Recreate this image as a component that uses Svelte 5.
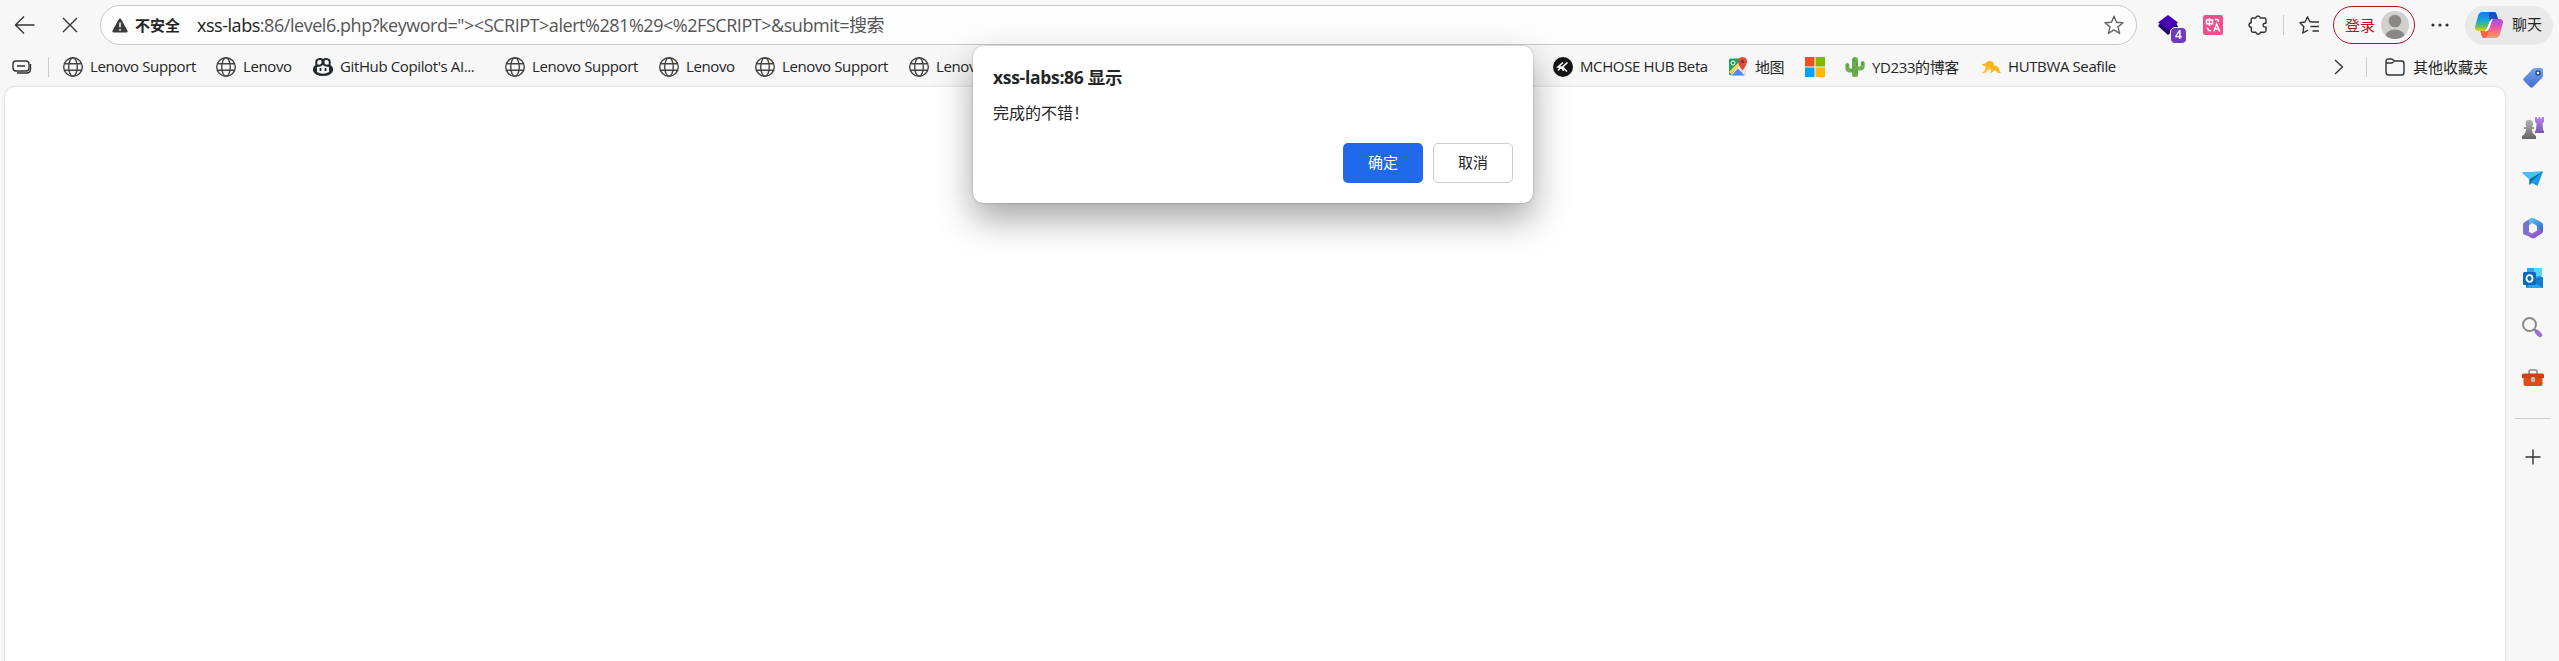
<script>
	const bookmarks = [
		{ icon: 'globe', label: 'Lenovo Support', width: 153 },
		{ icon: 'globe', label: 'Lenovo', width: 97 },
		{ icon: 'github', label: "GitHub Copilot's AI...", width: 192 },
		{ icon: 'globe', label: 'Lenovo Support', width: 154 },
		{ icon: 'globe', label: 'Lenovo', width: 96 },
		{ icon: 'globe', label: 'Lenovo Support', width: 154 },
		{ icon: 'globe', label: 'Lenovo', width: 644 },
		{ icon: 'mchose', label: 'MCHOSE HUB Beta', width: 175 },
		{ icon: 'map', label: '地图', width: 77 },
		{ icon: 'windows', label: '', width: 40 },
		{ icon: 'cactus', label: 'YD233的博客', width: 136 },
		{ icon: 'cloud', label: 'HUTBWA Seafile', width: 150 }
	];

	const tools = ['tag', 'games', 'drop', 'office', 'outlook', 'search', 'toolbox'];

	let open = $state(true);
	const close = () => (open = false);
</script>

{#snippet star()}
	<path d="M10 1.200l2.500 6 6.500.5-5 4.200 1.600 6.400L10 14.800l-5.600 3.500L6 11.900 1 7.700l6.500-.5z" />
{/snippet}

<div class="browser">
	<header class="toolbar">
		<button class="tool back" aria-label="Back">
			<svg width="22" height="20" viewBox="0 0 22 20" class="line"><path d="M20.500 10H1.500M10 1.500L1.500 10l8.500 8.500" /></svg>
		</button>
		<button class="tool stop" aria-label="Stop">
			<svg width="16" height="16" viewBox="0 0 16 16" class="line"><path d="M1 1l14 14M15 1L1 15" /></svg>
		</button>
		<div class="address">
			<svg width="16" height="15" viewBox="0 0 16 15"><path d="M8 .5q.8 0 1.200.8l6.200 11.200q.7 1.800-1 1.900H1.600q-1.700-.1-1-1.900L6.800 1.300Q7.200.5 8 .5z" fill="#3b3b3b" /><path d="M8 4.500v4.800M8 11v1.700" stroke="#fff" stroke-width="1.500" /></svg>
			<b class="insecure">不安全</b>
			<span class="url"><span class="host">xss-labs</span>:86/level6.php?keyword="&gt;&lt;SCRIPT&gt;alert%281%29&lt;%2FSCRIPT&gt;&amp;submit=搜索</span>
			<svg class="line favorite" width="20" height="20" viewBox="0 0 20 20">{@render star()}</svg>
		</div>
		<div class="extensions">
			<div class="layers">
				<svg width="20" height="20" viewBox="0 0 20 20"><path d="M0 11l2-3 9 5 7-5 2 4-10 8z" fill="#25006f" /><path d="M0 7.500L10 0l10 7.500-8.500 7.500z" fill="#4a00b5" /></svg>
				<span class="count">4</span>
			</div>
			<svg class="translate" width="20" height="20" viewBox="0 0 20 20"><rect width="20" height="20" rx="2.500" fill="#ef4f8c" /><path d="M3.500 5h6v3.700h-6zM6.500 3v8M12 4.500h2q1.500 0 1.500 2.500M4.500 12.500q0 3.300 3.500 3.300M10.700 16.500l3-7.500 3 7.500M11.700 14h4" fill="none" stroke="#fff" stroke-width="1.500" /></svg>
			<svg class="line puzzle" width="20" height="20" viewBox="0 0 20 20"><path d="M4.500 3h3.200q.4-2 2.300-2t2.300 2h4q1.700 0 1.700 1.700v3.500h-1.200q-1.800.3-1.800 2t1.800 1.900H18v3.500q0 1.600-1.700 1.600h-3.700q-.4 2-2.400 2t-2.400-2H5q-1.700 0-1.700-1.700v-3.200Q1 11.800 1 9.900t2.200-2.200V4.500Q3.200 3 4.500 3z" /></svg>
			<i class="rule"></i>
			<svg class="line favorites" width="21" height="20" viewBox="0 0 21 20"><path d="M13 7l-2.200-.3L8.500 1.800 6 7l-5 .8 3.800 4-1 6.200 5.200-2.800M13 7h7M11.500 11.500H20M13.500 16H20" /></svg>
		</div>
		<button class="login">
			<span>登录</span>
			<svg width="28" height="28" viewBox="0 0 28 28"><clipPath id="face"><circle cx="14" cy="14" r="14" /></clipPath><g clip-path="url(#face)"><path d="M0 0h28v28H0z" fill="#d2d0ce" /><circle cx="14" cy="10" r="6.300" fill="#8a8886" /><ellipse cx="14" cy="26" rx="10" ry="7.500" fill="#8a8886" /></g></svg>
		</button>
		<svg class="more" width="18" height="4" viewBox="0 0 18 4"><circle cx="2" cy="2" r="1.600" /><circle cx="9" cy="2" r="1.600" /><circle cx="16" cy="2" r="1.600" /></svg>
		<button class="chat">
			<svg width="28" height="26" viewBox="0 0 28 26">
				<defs>
					<linearGradient id="cool" x1="0" y1="0" x2="0" y2="1"><stop offset="0" stop-color="#1677e8" /><stop offset=".45" stop-color="#16a9d8" /><stop offset=".75" stop-color="#65ba62" /><stop offset="1" stop-color="#efd300" /></linearGradient>
					<linearGradient id="warm" x1="0" y1="0" x2="0" y2="1"><stop offset="0" stop-color="#a747ef" /><stop offset=".5" stop-color="#ee5b9e" /><stop offset="1" stop-color="#ff9f5c" /></linearGradient>
				</defs>
				<path d="M7.500 0H19q2 0 2.500 2l1.500 5h-4q-3 0-4 3l-2.500 6q-1 3-4 3H4q-5 0-3.700-5L3 4q1.200-4 4.500-4z" fill="url(#cool)" />
				<path d="M20.500 26H9.500q-2.500 0-3-3l-1-4h3q3 0 4-3L15 10q1-3 4-3h5q5 0 3.700 5L25 22q-1.200 4-4.500 4z" fill="url(#warm)" />
				<path d="M14 0h5q2 0 2.500 2L23 7h-4q-2.500 0-3.700 2.200L14 5z" fill="#1d4fc0" />
				<path d="M7 19h1.500q3 0 4-3l1.500 1-1.500 6q-1 3-3 3-2.500 0-3-3l-1-4z" fill="#f0654f" />
				<path d="M17.500 7.300q-2 .5-2.500 2.700l-2.500 6q-.8 2.500-2.500 3 3 0 4-3l2-6q.6-2 1.500-2.700z" fill="#fff" stroke="#fff" />
			</svg>
			<span>聊天</span>
		</button>
	</header>

	<nav class="bookmarks">
		<svg class="line workspaces" width="20" height="15" viewBox="0 0 20 15"><rect x="1" y="1" width="16" height="10" rx="3" /><path d="M5 6h8M18.500 4v5q0 4-4 4H5" /></svg>
		<i class="rule"></i>
		{#each bookmarks as bookmark}
			<a class="bookmark" href="#top" style="width: {bookmark.width}px">
				<svg width="20" height="20" viewBox="0 0 20 20">
					{#if bookmark.icon === 'globe'}
						<g fill="none" stroke="#444" stroke-width="1.400"><circle cx="10" cy="10" r="9.300" /><ellipse cx="10" cy="10" rx="4.300" ry="9.300" /><path d="M1.500 6.700h17M1.500 13.300h17" /></g>
					{:else if bookmark.icon === 'github'}
						<path d="M3 2.500Q5 .5 8 1q1.500.2 2 1.300Q10.500 1.200 12 1q3-.5 5 1.500 1.300 2 .5 5.500Q20 9.500 20 12v2q-2 5-10 5T0 14v-2q0-2.500 2.500-4Q1.700 4.500 3 2.500z" fill="#24292f" />
						<path d="M4.500 4q1-1.500 3.500-1 1 1 .3 3.500-1.800 2-4 .8Q4 5.500 4.500 4zM15.500 4q-1-1.500-3.500-1-1 1-.3 3.500 1.800 2 4 .8.300-1.800-.2-3.300zM4 10q4 0 6-2 2 2 6 2v5q-6 3.500-12 0z" fill="#f7f7f7" />
						<path d="M7.500 11v3M12.500 11v3" stroke="#24292f" stroke-width="1.800" />
					{:else if bookmark.icon === 'mchose'}
						<circle cx="10" cy="10" r="10" fill="#151515" />
						<path d="M10 5.500L5 10h3.500l2 4M14.500 5.500L9.500 10l4.500 4.500M5 13.500L8 10" fill="none" stroke="#fff" stroke-width="1.600" />
					{:else if bookmark.icon === 'map'}
						<path d="M1 3q0-1.500 1.500-1.500H15L3 18.500Q1 18 1 17z" fill="#1da462" />
						<path d="M3 18.500L15 7l3 3v7q0 1.500-1.500 1.500z" fill="#e3e3e3" /><path d="M2 16L15 3" stroke="#ffd04b" stroke-width="3" /><path d="M2.500 19L10 11l7.500 8z" fill="#4c8bf5" stroke="#f4f4f4" stroke-width=".8" />
						<path d="M14.500 0Q19 .3 19 4.500q0 3-4.500 9-4.500-6-4.500-9Q10 .3 14.500 0z" fill="#dd4b3e" /><circle cx="14.500" cy="4.500" r="1.600" fill="#822f2b" /><circle cx="5" cy="6" r="2" fill="none" stroke="#fff" />
					{:else if bookmark.icon === 'windows'}
						<path d="M0 0h9.500v9.500H0z" fill="#f25022" /><path d="M10.500 0H20v9.500h-9.500z" fill="#7fba00" /><path d="M0 10.500h9.500V20H0z" fill="#00a4ef" /><path d="M10.500 10.500H20V20h-9.500z" fill="#ffb900" />
					{:else if bookmark.icon === 'cactus'}
						<path d="M10 3v14.500" fill="none" stroke="#6aaf50" stroke-width="6" stroke-linecap="round" />
						<path d="M2.300 8v2.500q0 3 3 3H9M17.700 6v2.500q0 3-3 3H11" fill="none" stroke="#6aaf50" stroke-width="4" stroke-linecap="round" />
						<path d="M9 2v3M11.500 6v3M9 9v3M11 13v4M2.500 8v2M17.500 5v3M6 13.500h2" stroke="#4b913c" stroke-width="1" />
					{:else}
						<path d="M1 8.500q0-2.500 3.500-2Q5.500 3.500 9 4q4 0 4 4.500 4.500 0 5 3.500 0 2 2 3.500-3 1.500-4.500-1-1.500-2.500-3.500 0-2 2.500-4 2 2.500-1 2-3.500-1-2-3 .500-2 2.500-6 2.500 3-2 4-5.500Q5 9 1 8.500z" fill="#ffb31f" />
						<path d="M1.500 16q5-2 7-6" fill="none" stroke="#ffc74a" stroke-width="1.500" />
					{/if}
				</svg>
				<span>{bookmark.label}</span>
			</a>
		{/each}
		<svg class="line chevron" width="10" height="16" viewBox="0 0 10 16"><path d="M1 1l7.500 7L1 15" /></svg>
		<i class="rule"></i>
		<svg class="line folder" width="20" height="18" viewBox="0 0 20 18"><path d="M1 5V3.500Q1 1 3.500 1H7l2.500 2h6.700Q19 3 19 5.500v8.700q0 2.800-2.800 2.800H3.800Q1 17 1 14.200V5h5.200q1 0 1.800-.8L9.500 3" /></svg>
		<span class="others">其他收藏夹</span>
	</nav>

	<div class="body">
		<main class="page"></main>
	</div>

	<aside class="sidebar">
		{#each tools as tool}
			<svg width="22" height="22" viewBox="0 0 22 22">
				{#if tool === 'tag'}
					<linearGradient id="tag" x2="0" y2="1"><stop stop-color="#71a5ed" /><stop offset="1" stop-color="#466bd0" /></linearGradient>
					<path d="M11 1.500Q12 1 13.500 1H19q2 0 2 2v6q0 1-1 2l-9 9q-1.500 1.500-3 0l-6-6q-1.500-1.500 0-3z" fill="url(#tag)" /><circle cx="16" cy="6" r="2" fill="#fff" stroke="#264a89" stroke-width="1.400" />
				{:else if tool === 'games'}
					<linearGradient id="pawn" x2="0" y2="1"><stop stop-color="#b5b5b5" /><stop offset="1" stop-color="#656565" /></linearGradient><linearGradient id="rook" x2="0" y2="1"><stop stop-color="#bb83ef" /><stop offset="1" stop-color="#7754b5" /></linearGradient>
					<path d="M13 0h2v1.500h1.500V0h2v1.500H20V0h2v5l-1.500 1 .5 7 1 1v2h-9v-2l1-1 .5-7-1.500-1z" fill="url(#rook)" /><path d="M3.500 6.500a3.800 3.800 0 117.600 0q0 2-1.200 3.500H12v2h-2q0 5 4 7v3H0v-3q4-2 4-7H2v-2h2.500Q3.500 8.500 3.500 6.500z" fill="url(#pawn)" />
				{:else if tool === 'drop'}
					<path d="M0 5.500l21-1L15.500 19l-5-3-3 2v-5.500z" fill="#159ce7" /><path d="M0 5.500l21-1-13.500 8z" fill="#49c2f3" /><path d="M21 4.500L7.500 12.500V18l2-4z" fill="#105e9f" />
				{:else if tool === 'office'}
					<linearGradient id="officea" x2="1" y2="1"><stop stop-color="#6bc4ef" /><stop offset="1" stop-color="#2864d1" /></linearGradient><linearGradient id="officeb" x2="1" y2="1"><stop stop-color="#b789df" /><stop offset="1" stop-color="#6f40be" /></linearGradient>
					<path d="M10 1L2.500 5Q1 6 1 8v8q0 1.500 2 2l4 .5V8l5-4z" fill="#7773d3" /><path d="M8.500 1.500q2-1 4 0L19 5q2 1.200 2 3v7l-6-3V9l-5-3-3 2V3z" fill="url(#officea)" /><path d="M6 14l4 2.500 5-3V11l6 3q0 2-2 3l-6.500 4q-1.500.7-3 0L4 18q3 0 2-4z" fill="url(#officeb)" /><circle cx="11" cy="11" r="3.800" fill="#f7f7f7" />
				{:else if tool === 'outlook'}
					<path d="M5 1h14.500v16H5z" fill="#32a9e7" /><path d="M12 1h7.500v8H12z" fill="#50d9ff" /><path d="M4 12l17-2v11H4z" fill="#117bce" /><path d="M4 21h17l-11-7z" fill="#27a5ec" /><rect y="5" width="13" height="13" x="1" rx="1.500" fill="#0968bd" /><ellipse cx="7.500" cy="11.500" rx="3" ry="3.300" fill="none" stroke="#fff" stroke-width="1.800" />
				{:else if tool === 'search'}
					<path d="M12.500 12.500l3 3" stroke="#777" stroke-width="2" /><circle cx="7.500" cy="7.500" r="6.500" fill="none" stroke="#888" stroke-width="2" /><path d="M15 15l3 3" stroke="#9970cf" stroke-width="4.500" stroke-linecap="round" />
				{:else}
					<path d="M7 7V4.500Q7 3 8.500 3h5Q15 3 15 4.500V7" fill="none" stroke="#8b8b8b" stroke-width="1.600" /><path d="M1.500 10h19v7q0 2-2 2h-15q-2 0-2-2z" fill="#e14b16" /><path d="M0 8q0-1.500 1.500-1.500h19Q22 6.500 22 8v3H0z" fill="#cb4310" /><rect x="9" y="10" width="4" height="5" rx="1" fill="#bbb" />
				{/if}
			</svg>
		{/each}
		<hr />
		<svg class="line plus" width="16" height="16" viewBox="0 0 16 16"><path d="M8 .5v15M.5 8h15" /></svg>
	</aside>

	{#if open}
		<div class="dialog" role="alertdialog">
			<h1>xss-labs:86 显示</h1>
			<p>完成的不错！</p>
			<div class="actions">
				<button class="ok" onclick={close}>确定</button>
				<button class="cancel" onclick={close}>取消</button>
			</div>
		</div>
	{/if}
</div>

<style>
	:global(body) {
		margin: 0;
	}
	.browser {
		position: relative;
		box-sizing: border-box;
		width: 2559px;
		height: 661px;
		overflow: hidden;
		background: #f7f7f7;
		color: #252525;
		font: 15px "Open Sans", "Noto Sans CJK SC", sans-serif;
	}
	svg, i {
		flex: none;
	}
	button {
		padding: 0;
		border: 0;
		background: none;
		font: inherit;
		color: inherit;
	}
	.line {
		fill: none;
		stroke: #333;
		stroke-width: 1.400;
		stroke-linejoin: round;
	}
	.toolbar {
		display: flex;
		align-items: center;
		height: 50px;
	}
	.tool {
		display: flex;
	}
	.back {
		margin-left: 14px;
	}
	.stop {
		margin-left: 26px;
	}
	.address {
		display: flex;
		align-items: center;
		box-sizing: border-box;
		width: 2037px;
		height: 40px;
		margin-left: 22px;
		padding: 0 12px 0 11px;
		border: 1px solid #c9c9c9;
		border-radius: 20px;
		background: #fdfdfd;
	}
	.insecure {
		margin-left: 7px;
		width: 62px;
		line-height: 20px;
	}
	.url {
		flex: 1;
		padding-bottom: 3px;
		color: #555;
		font-size: 18px;
		letter-spacing: -0.460px;
		white-space: nowrap;
	}
	.host {
		color: #202020;
	}
	.favorite {
		stroke: #666;
	}
	.extensions {
		display: flex;
		align-items: center;
		margin-left: 21px;
	}
	.layers {
		position: relative;
		height: 20px;
	}
	.count {
		position: absolute;
		left: 12px;
		top: 12px;
		width: 15px;
		height: 15px;
		border: 1px solid #f7f7f7;
		border-radius: 5px;
		background: #6e3bbd;
		color: #fff;
		font-size: 12px;
		font-weight: 600;
		line-height: 14px;
		text-align: center;
	}
	.translate {
		margin-left: 25px;
	}
	.puzzle {
		margin-left: 25px;
	}
	.rule {
		width: 1px;
		height: 20px;
		background: #ccc;
	}
	.extensions .rule {
		margin: 0 15px;
	}
	.login {
		display: flex;
		align-items: center;
		box-sizing: border-box;
		width: 82px;
		height: 38px;
		margin-left: 13px;
		padding-left: 11px;
		border: 1.500px solid #b3141b;
		border-radius: 19px;
		color: #b3141b;
	}
	.login span {
		width: 36px;
		padding-bottom: 2px;
		text-align: left;
	}
	.more {
		margin-left: 16px;
		fill: #333;
	}
	.chat {
		display: flex;
		align-items: center;
		width: 88px;
		height: 39px;
		margin-left: 16px;
		border-radius: 20px;
		background: #e9e9e9;
	}
	.chat svg {
		margin: 0 9px 0 10px;
	}
	.chat span {
		padding-bottom: 3px;
	}
	.bookmarks {
		display: flex;
		align-items: center;
		height: 34px;
	}
	.workspaces {
		margin-left: 12px;
		margin-right: 16px;
	}
	.bookmark {
		display: flex;
		flex: none;
		align-items: center;
		gap: 7px;
		color: inherit;
		text-decoration: none;
		white-space: nowrap;
		letter-spacing: -0.380px;
	}
	.bookmark span {
		padding-bottom: 2px;
	}
	.rule + .bookmark {
		margin-left: 14px;
	}
	.chevron {
		margin: 0 22px 0 203px;
	}
	.folder {
		margin: 0 8px 0 18px;
	}
	.others {
		padding-bottom: 2px;
		white-space: nowrap;
	}
	.body {
		padding: 3px 0 0 5px;
	}
	.page {
		width: 2500px;
		height: 600px;
		border-radius: 10px;
		background: #fff;
		box-shadow: 0 0 3px rgba(0, 0, 0, 0.180);
	}
	.sidebar {
		position: absolute;
		top: 67px;
		right: 9px;
		display: flex;
		flex-direction: column;
		align-items: center;
		gap: 28px;
		width: 35px;
	}
	.sidebar hr {
		width: 35px;
		height: 1px;
		margin: 1px 0 0;
		border: 0;
		background: #ccc;
	}
	.plus {
		margin-top: 2px;
	}
	.dialog {
		position: absolute;
		left: 973px;
		top: 46px;
		box-sizing: border-box;
		width: 560px;
		height: 157px;
		padding: 19px 20px 20px;
		border-radius: 10px;
		background: #fff;
		box-shadow: 0 0 2px rgba(0, 0, 0, 0.300), 0 16px 36px rgba(0, 0, 0, 0.360);
	}
	h1 {
		margin: 0;
		font-size: 17.500px;
		line-height: 24px;
		letter-spacing: -0.300px;
	}
	p {
		margin: 13px 0 0;
		font-size: 16px;
		line-height: 22px;
	}
	.actions {
		display: flex;
		justify-content: flex-end;
		gap: 10px;
		margin-top: 19px;
	}
	.actions button {
		box-sizing: border-box;
		width: 80px;
		height: 40px;
		padding-bottom: 3px;
		border-radius: 5px;
	}
	.ok {
		background: #2169eb;
		color: #fff;
	}
	.cancel {
		border: 1px solid #ccc;
	}
</style>
